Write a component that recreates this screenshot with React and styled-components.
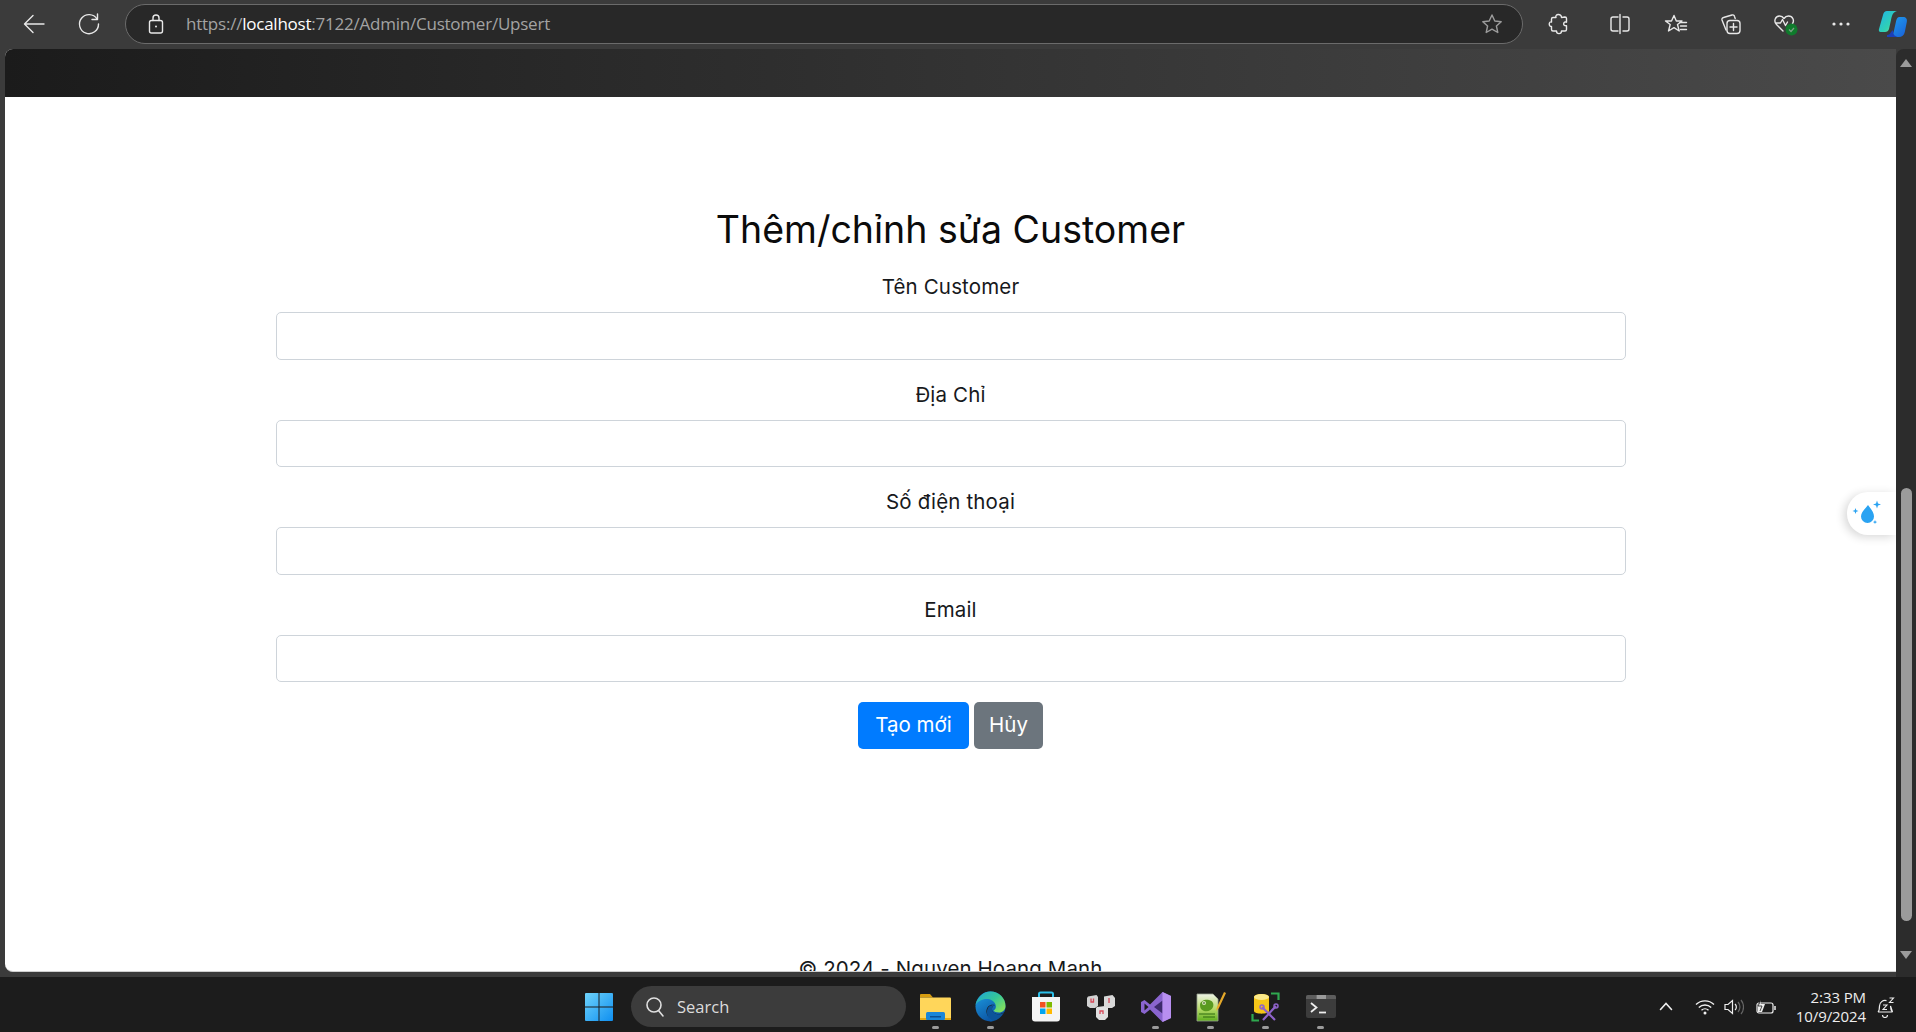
import React from "react";
import styled, { createGlobalStyle } from "styled-components";

const Global = createGlobalStyle`
  html, body { margin: 0; padding: 0; height: 100%; overflow: hidden; background: #1c1c1c; }
  * { box-sizing: border-box; }
`;
const Shell = styled.div`
  width: 1916px; height: 1032px; display: flex; flex-direction: column; overflow: hidden;
  font-family: "Inter", "Liberation Sans", sans-serif;
`;
const Toolbar = styled.div`
  height: 49px; flex: none; background: #3b3b3b; display: flex; align-items: center; padding: 0 0 2px 6.5px;
`;
const Btn = styled.div`
  width: ${p => p.$w || 55}px; height: 40px; flex: none; display: flex; align-items: center; justify-content: center;
`;
const Address = styled.div`
  width: 1398px; height: 40px; flex: none; margin: 0 8px 0 8.5px; border: 1px solid #6b6b6b; border-radius: 20px; background: #282828;
  display: flex; align-items: center; padding: 0 19px 0 21px;
`;
const Url = styled.div`
  flex: 1; margin-left: 21px; font: 17px "Open Sans", sans-serif; color: #a3a3a3; letter-spacing: -0.23px; white-space: nowrap;
  b { font-weight: 400; color: #fff; }
`;
const Sep = styled.div`
  width: 1px; height: 20px; background: #6a6a6a; margin: 0 3px;
`;
const Middle = styled.div`
  flex: 1; min-height: 0; display: flex; background: #3b3b3b; padding-left: 5px; position: relative;
`;
const Viewport = styled.div`
  flex: 1; min-width: 0; display: flex; flex-direction: column; padding-bottom: 5px;
`;
const Page = styled.main`
  flex: 1; min-height: 0; overflow: hidden; background: #fff; border-radius: 8px 0 0 8px; display: flex; flex-direction: column; align-items: center;
  border-bottom: 1px solid #cfcfcf;
`;
const PageHeader = styled.div`
  width: 100%; height: 48px; flex: none; background: linear-gradient(90deg, #1b1b1b 0%, #4a4a4a 100%);
`;
const Form = styled.form`
  width: 1350px; flex: none; padding-top: 109px; display: flex; flex-direction: column; align-items: center; color: #111;
`;
const Title = styled.h2`
  margin: 0 0 18px; font: 400 37.5px/48px "Inter", sans-serif; color: #0b0b0b; text-align: center;
`;
const Field = styled.div`
  width: 100%; display: flex; flex-direction: column; align-items: center; margin-bottom: 20px;
`;
const Label = styled.label`
  font: 400 20.5px/30px "Inter", sans-serif; letter-spacing: .15px; color: #17191c; margin-bottom: 10px;
`;
const Input = styled.input`
  width: 100%; height: 47.5px; border: 1px solid #ced4da; border-radius: 5px; background: #fff; display: block; outline: none;
`;
const Actions = styled.div`
  display: flex; gap: 5px; justify-content: center;
`;
const Button = styled.button`
  height: 47px; width: ${p => p.$w}px; border: 0; border-radius: 5px; background: ${p => p.$bg}; color: #fff; font: 400 20.5px "Inter", sans-serif; padding: 0 0 2px;
`;
const Footer = styled.div`
  flex: none; margin-top: 205px; font: 400 20.5px/30px "Inter", sans-serif; letter-spacing: .1px; color: #17191c; white-space: nowrap;
`;
const Scrollbar = styled.div`
  width: 20px; flex: none; background: #2c2c2c; border-radius: 8px 0 0 0; display: flex; flex-direction: column; align-items: center; position: relative;
  padding: 10px 0 8px;
`;
const Thumb = styled.div`
  width: 11px; height: 433px; margin-top: 421px; background: #9b9b9b; border-radius: 6px; flex: none; margin-bottom: 30px;
`;
const Arrow = styled.div`
  width: 0; height: 0; border-left: 6px solid transparent; border-right: 6px solid transparent; flex: none;
  ${p => p.$down ? "border-top: 8px solid #9b9b9b;" : "border-bottom: 8px solid #9b9b9b;"}
`;
const Widget = styled.div`
  position: absolute; right: 20px; top: 443px; width: 49px; height: 43px; background: #fff; border-radius: 21px 0 0 21px;
  box-shadow: -3px 2px 10px rgba(0,0,0,.16); display: flex; align-items: center; justify-content: center; padding-right: 7px;
`;
const Taskbar = styled.footer`
  height: 55px; flex: none; background: #1c1c1c; display: flex; align-items: center; padding: 4px 0 0 582px; color: #fff;
`;
const WinBtn = styled.div`
  width: 34px; height: 34px; flex: none; display: flex; align-items: center; justify-content: center;
`;
const Search = styled.div`
  width: 275px; height: 41px; flex: none; margin: 0 2px 0 15px; background: #3c3c3c; border-radius: 21px; display: flex; align-items: center; gap: 12px; padding-left: 14px;
  font: 16.5px "Open Sans", sans-serif; color: #dcdcdc;
`;
const AppSlot = styled.div`
  width: 55px; height: 54px; flex: none; display: flex; align-items: center; justify-content: center; position: relative;
  ${p => p.$on && `&::after { content: ""; position: absolute; bottom: 5px; left: 24px; width: 7px; height: 3px; border-radius: 2px; background: #9b9b9b; }`}
`;
const Tray = styled.div`
  margin-left: auto; padding-right: 10px; display: flex; align-items: center; height: 100%;
`;
const TrayIcon = styled.div`
  width: ${p => p.$w || 29}px; margin-left: ${p => p.$ml || 0}px; display: flex; justify-content: center; flex: none;
`;
const Clock = styled.div`
  width: 82px; text-align: right; font: 15px/19px "Open Sans", sans-serif; color: #eee; letter-spacing: -.1px; white-space: nowrap;
`;

const S = { fill: "none", stroke: "#e8e8e8", strokeWidth: 1.4, strokeLinecap: "round", strokeLinejoin: "round" };

const Back = () => <svg width="24" height="24" viewBox="0 0 24 24" {...S}><path d="M22 12H3M11 3.5 2.5 12l8.500 8.500" /></svg>;
const Reload = () => <svg width="24" height="24" viewBox="0 0 24 24" {...S}><path d="M20 7a9.500 9.500 0 1 0 1.500 5" /><path d="M20.500 2v5.500H15" /></svg>;
const Lock = () => <svg width="18" height="20" viewBox="0 0 18 20" {...S}><rect x="2.500" y="6.500" width="13" height="12.500" rx="2" /><path d="M6 6.500V4a3 3 0 0 1 6 0v2.500" /><circle cx="9" cy="12.500" r="1" fill="#e8e8e8" stroke="none" /></svg>;
const Star = () => <svg width="22" height="22" viewBox="0 0 22 22" {...S} stroke="#9c9c9c"><path d="m11 2 2.800 6 6.400.7-4.800 4.300 1.400 6.500L11 16.200 5.200 19.500 6.600 13 1.800 8.700 8.200 8Z" /></svg>;
const Puzzle = () => <svg width="22" height="22" viewBox="0 0 22 22" {...S}><path d="M8 4.500C6.500 1 13.500 0 13.500 4.500L17 4c1 0 1.500 .5 1.500 1.500v3.700c-3-1.500-4.500 4 0 3.600V16.500c0 1-.5 1.500-1.500 1.500h-3.500C13.500 21.500 8.500 21.500 8.500 18H5c-1 0-1.500-.5-1.500-1.500V13.500C.5 14 .5 8 3.500 9V6c0-1 .5-1.500 1.500-1.500Z" /></svg>;
const Split = () => <svg width="22" height="22" viewBox="0 0 22 22" {...S}><path d="M9 4H4a2 2 0 0 0-2 2v10a2 2 0 0 0 2 2h5M14 4h4a2 2 0 0 1 2 2v10a2 2 0 0 1-2 2h-4M11 1.500v19" /></svg>;
const Fav = () => <svg width="24" height="22" viewBox="0 0 24 22" {...S}><path d="M10 2.500 12.300 8H18l-4.500 3.500 1.700 6.500-5.200-3.300-5.500 3.300 1.700-6.500L1.500 8h6Z" /><path d="M16 9.500h6.500M16.500 13h6M16.500 16.500h6" /></svg>;
const Collections = () => <svg width="24" height="24" viewBox="0 0 24 24" {...S}><path d="M7 18 3 8a2 2 0 0 1 1.500-2.500L13 3a2 2 0 0 1 2.500 1.500l.7 2" /><rect x="8" y="8.500" width="13" height="13" rx="3" /><path d="M14.500 11.500v7M11 15h7" /></svg>;
const Heart = () => <svg width="26" height="24" viewBox="0 0 26 24"><path {...S} d="M10 19 3.500 12.500C.5 9.500 2 4 6.500 4c2 0 3.500 1 4.500 2.500C12 5 13.500 4 15.500 4 20 4 21.500 9 19.500 11.500M2.500 11h5l2-3.500 3 6 2-3.500" /><circle cx="18.500" cy="17.500" r="6" fill="#0f7b2c" /><path d="m16 17.500 2 2 3-3.500" fill="none" stroke="#7f9f86" strokeWidth="1.200" /></svg>;
const Dots = () => <svg width="18" height="4" viewBox="0 0 18 4" fill="#e8e8e8"><circle cx="2" cy="2" r="1.600" /><circle cx="9" cy="2" r="1.600" /><circle cx="16" cy="2" r="1.600" /></svg>;
const Copilot = () => (
  <svg width="30" height="28" viewBox="0 0 30 28">
    <defs>
      <linearGradient id="c1" x1="0" y1="0" x2="1" y2="1"><stop offset="0" stopColor="#20b3e8" /><stop offset=".6" stopColor="#2fd0b5" /><stop offset="1" stopColor="#7fe08c" /></linearGradient>
      <linearGradient id="c2" x1="0" y1="0" x2="1" y2="1"><stop offset="0" stopColor="#1fa4ee" /><stop offset="1" stopColor="#1a5fd8" /></linearGradient>
    </defs>
    <path d="M9 1h10c-4 1-5 4-6 9l-2 9c-.5 2-2 3-4 3H2.500C1 22 .5 20.500 1 19L5 5c.6-2.500 2-4 4-4Z" fill="url(#c1)" />
    <path d="M21 7h4c3 0 4.500 2 3.800 5l-2 10c-.7 3.500-3 5-5.800 5H10c3.500-.5 5-2.500 6-6.500l2-9c.4-2 1.300-4.500 3-4.500Z" fill="url(#c2)" />
    <path d="M9 27h12c-4 0-6-2-6-7l-2 2c-1 2-2 3-4 3Z" fill="#1b3fb8" />
  </svg>
);
const Drop = () => (
  <svg width="32" height="30" viewBox="0 0 32 30" fill="#2aa3f2">
    <path d="M16 6c2.500 3.500 6 7 6 11.500a6.500 6.500 0 0 1-13 0C9 13 13.500 9.500 16 6Z" />
    <path d="M25 1.500l1 3 3 1-3 1-1 3-1-3-3-1 3-1ZM3.500 9l.8 2.200 2.200.8-2.200.8L3.500 15l-.8-2.200L.5 12l2.200-.8ZM23 21l.6 1.500 1.500.6-1.500.6L23 25l-.6-1.300-1.500-.6 1.500-.6Z" />
  </svg>
);
const Windows = () => (
  <svg width="30" height="30" viewBox="0 0 30 30">
    <defs><linearGradient id="w" x1="0" y1="0" x2="1" y2="1"><stop offset="0" stopColor="#6ed3fb" /><stop offset="1" stopColor="#0f8ff0" /></linearGradient></defs>
    <path d="M1 2a1 1 0 0 1 1-1h12.500v13.500H1ZM15.500 1H28a1 1 0 0 1 1 1v12.500H15.500ZM1 15.500h13.500V29H2a1 1 0 0 1-1-1ZM15.500 15.500H29V28a1 1 0 0 1-1 1H15.500Z" fill="url(#w)" />
  </svg>
);
const SearchIcon = () => <svg width="20" height="22" viewBox="0 0 20 22" fill="none" stroke="#e0e0e0" strokeWidth="1.600"><circle cx="9" cy="9" r="7" /><path d="m13.500 14.500 4.500 5.500" strokeLinecap="round" /></svg>;
const Folder = () => (
  <svg width="31" height="28" viewBox="0 0 31 28">
    <path d="M0 2a1 1 0 0 1 1-1h9l3 3.500H0Z" fill="#d69c0f" />
    <path d="M0 4.500h30a1 1 0 0 1 1 1V26a1 1 0 0 1-1 1H0Z" fill="#ffd65a" />
    <path d="M0 25h31v2H0Z" fill="#e8a80f" />
    <rect x="6" y="19" width="19" height="8" rx="1.500" fill="#1a86d8" />
    <rect x="10" y="23" width="11" height="1.500" fill="#0a4f92" />
  </svg>
);
const Edge = () => (
  <svg width="31" height="31" viewBox="0 0 31 31">
    <defs>
      <linearGradient id="e1" x1="0" y1="0" x2="1" y2=".8"><stop offset="0" stopColor="#1fa5d8" /><stop offset=".55" stopColor="#34c79a" /><stop offset="1" stopColor="#86e05a" /></linearGradient>
      <linearGradient id="e2" x1="0" y1="0" x2=".6" y2="1"><stop offset="0" stopColor="#1d9fe4" /><stop offset="1" stopColor="#0b4f9e" /></linearGradient>
    </defs>
    <circle cx="15.500" cy="15.500" r="15" fill="url(#e2)" />
    <path d="M31 20 C26 24 21 24 18 21 C16 18 17 15 20 14 C15 12.500 11 16 11.500 21 C12 27 18 31 24 31 L31 31Z" fill="#1c1c1c" />
    <path d="M12 20C12.500 15.500 15.500 13.500 20 14 C17 15 16 18 18 21 C21 24 26 24 29 21.500 C26 27 21 30.500 15.500 30.500 C13 27 11.700 24 12 20Z" fill="#0b5ba8" opacity=".9" />
    <path d="M15.500.5C24 .5 30.500 7 30.500 15c0 4-3 6.500-6.500 6.500-3 0-5-1-5.500-2 2-1 3-3 2-6-1.200-3.500-5-5.500-9-5.500-4.500 0-9 2.500-11 6C2.500 6 8.500.5 15.500.5Z" fill="url(#e1)" />
  </svg>
);
const Store = () => (
  <svg width="30" height="31" viewBox="0 0 30 31">
    <path d="M8 7V3a1.500 1.500 0 0 1 1.500-1.500h11A1.500 1.500 0 0 1 22 3v4" fill="none" stroke="#2cc0ea" strokeWidth="2" />
    <path d="M1 6h28v21.500a3 3 0 0 1-3 3H4a3 3 0 0 1-3-3Z" fill="#f4f4f4" />
    <rect x="9" y="11" width="5.500" height="5.500" fill="#f25022" /><rect x="15.500" y="11" width="5.500" height="5.500" fill="#7fba00" />
    <rect x="9" y="17.500" width="5.500" height="5.500" fill="#00a4ef" /><rect x="15.500" y="17.500" width="5.500" height="5.500" fill="#ffb900" />
  </svg>
);
const Unikey = () => (
  <svg width="30" height="28" viewBox="0 0 30 28">
    <path d="M2 3.500 10.500 2l1.500 2v9l-3 2H4l-3-2V5Z" fill="#d2d2d2" />
    <path d="M18 3.500 26.500 2 29 5v8l-3 2h-5l-3-2Z" fill="#d8d8d8" />
    <path d="M11 14l8-1 3 2v9l-3 3h-6l-3-3v-9Z" fill="#e0e0e0" />
    <path d="M5 5.500V9h2.500V5.500M23 5v5M14 21v-3h3v3" stroke="#d74a5a" strokeWidth="1.300" fill="none" />
  </svg>
);
const VS = () => (
  <svg width="30" height="30" viewBox="0 0 30 30">
    <path d="M21.500 0 9 12.500 3.500 8 0 10v10l3.500 2L9 17.500 21.500 30l8.500-4V4Z" fill="#8a65cf" />
    <path d="M3.500 11.500v7L7.500 15Z" fill="#1c1c1c" />
    <path d="M21.500 8.500v13L13 15Z" fill="#3d2a6c" />
    <path d="M21.500 0 30 4v22l-8.500 4Z" fill="#b88ff0" />
  </svg>
);
const Npp = () => (
  <svg width="30" height="30" viewBox="0 0 30 30">
    <defs><linearGradient id="n" x1="0" y1="0" x2="0" y2="1"><stop offset="0" stopColor="#eef2e6" /><stop offset=".55" stopColor="#b8dc6a" /><stop offset="1" stopColor="#5fae1e" /></linearGradient></defs>
    <path d="M1 2h16l5 5v22H1Z" fill="url(#n)" stroke="#9aa48f" strokeWidth=".8" />
    <path d="M4 13c0-4 5-6 9-5 4 1 5 4 4 7-1 3-5 5-9 4-3-1-4-3-4-6Z" fill="#5a9a20" />
    <circle cx="8" cy="11" r="2" fill="#d8e8b8" /><circle cx="8" cy="11" r=".8" fill="#1c3a0a" />
    <path d="M3 22h16M7 25h12" stroke="#2f6a10" strokeWidth="1.200" />
    <path d="M28 0 21 15l-1 4 3-3 7-15Z" fill="#e5a92a" />
  </svg>
);
const Sql = () => (
  <svg width="29" height="30" viewBox="0 0 29 30">
    <path d="M3 5c0-4 15-4 15 0v14c0 3.500-15 3.500-15 0Z" fill="#f5c518" />
    <ellipse cx="10.500" cy="5" rx="7.500" ry="3" fill="#fbe98a" />
    <path d="M20 1.500h7.500V8M1.500 22v6.500H8" fill="none" stroke="#2fa84f" strokeWidth="2.200" />
    <path d="M11 15 24 28M25 14 12 28" stroke="#8f63c9" strokeWidth="2.200" />
    <circle cx="11" cy="15" r="2" fill="none" stroke="#8f63c9" strokeWidth="1.500" />
    <circle cx="25" cy="14" r="2" fill="none" stroke="#8f63c9" strokeWidth="1.500" />
  </svg>
);
const Terminal = () => (
  <svg width="30" height="23" viewBox="0 0 30 23">
    <rect width="30" height="23" rx="2" fill="#3c3c3c" />
    <path d="M0 2a2 2 0 0 1 2-2h8.500v4H0Z" fill="#5d5d5d" /><path d="M10.500 0H20v4h-9.500Z" fill="#9a9a9a" /><path d="M20 0h8a2 2 0 0 1 2 2v2H20Z" fill="#5d5d5d" />
    <path d="m5 8 5.500 4.500L5 17" fill="none" stroke="#eee" strokeWidth="1.800" /><path d="M13 17.500h7" stroke="#eee" strokeWidth="1.800" />
  </svg>
);
const Chevron = () => <svg width="14" height="9" viewBox="0 0 14 9" fill="none" stroke="#eee" strokeWidth="1.600" strokeLinecap="round"><path d="m1.500 7.500 5.500-6 5.500 6" /></svg>;
const Wifi = () => <svg width="20" height="16" viewBox="0 0 20 16" fill="none" stroke="#f0f0f0" strokeWidth="1.400"><path d="M1 5.500a13 13 0 0 1 18 0M3.800 8.500a9 9 0 0 1 12.400 0M6.500 11.300a5 5 0 0 1 7 0" /><circle cx="10" cy="14" r="1.500" fill="#f0f0f0" stroke="none" /></svg>;
const Speaker = () => <svg width="20" height="16" viewBox="0 0 20 16" fill="none" stroke="#eee" strokeWidth="1.200"><path d="M1 5.500h3L8.500 1.500v13L4 10.500H1Z" /><path d="M11 5a4 4 0 0 1 0 6" /><path d="M14 3a7.500 7.500 0 0 1 0 10M17 1a11 11 0 0 1 0 14" stroke="#666" /></svg>;
const Battery = () => <svg width="21" height="16" viewBox="0 0 21 16" fill="none" stroke="#eee" strokeWidth="1.200"><rect x="1" y="4" width="16" height="10" rx="2" /><path d="M19 7v4" strokeWidth="1.500" /><path d="M2 13V5h7L6 13Z" fill="#eee" stroke="none" /><path d="m5 1-3 6h4l-2 5" stroke="#1c1c1c" strokeWidth=".8" fill="#eee" /></svg>;
const Bell = () => <svg width="20" height="22" viewBox="0 0 20 22" fill="none" stroke="#eee" strokeWidth="1.200"><path d="M2 16c1.500-1.500 1.500-3 1.500-6a5.500 5.500 0 0 1 7-5.300M14.500 10c0 3 .5 4.500 2 6ZM2 16h14.500M6.500 19a2.500 2.500 0 0 0 5 0" /><path d="M7 9h4l-4 4.500h4M13.500 2h4l-4 4.500h4" strokeWidth="1.100" /></svg>;

const fields = ["Tên Customer", "Địa Chỉ", "Số điện thoại", "Email"];
const apps = [
  [Folder, true], [Edge, true], [Store, false], [Unikey, false], [VS, true], [Npp, true], [Sql, true], [Terminal, true],
];

export default function App() {
  return (
    <Shell>
      <Global />
      <Toolbar>
        <Btn><Back /></Btn>
        <Btn><Reload /></Btn>
        <Address>
          <Lock />
          <Url>https://<b>localhost</b>:7122/Admin/Customer/Upsert</Url>
          <Star />
        </Address>
        <Btn><Puzzle /></Btn>
        <Sep />
        <Btn $w={56}><Split /></Btn>
        <Btn><Fav /></Btn>
        <Btn><Collections /></Btn>
        <Btn><Heart /></Btn>
        <Btn><Dots /></Btn>
        <Btn $w={50}><Copilot /></Btn>
      </Toolbar>
      <Middle>
        <Viewport>
          <Page>
            <PageHeader />
            <Form>
              <Title>Thêm/chỉnh sửa Customer</Title>
              {fields.map(f => (
                <Field key={f}>
                  <Label>{f}</Label>
                  <Input type="text" />
                </Field>
              ))}
              <Actions>
                <Button type="button" $bg="#007bff" $w={111}>Tạo mới</Button>
                <Button type="button" $bg="#6c757d" $w={69}>Hủy</Button>
              </Actions>
            </Form>
            <Footer>© 2024 - Nguyen Hoang Manh</Footer>
          </Page>
        </Viewport>
        <Scrollbar>
          <Arrow />
          <Thumb />
          <Arrow $down />
        </Scrollbar>
        <Widget><Drop /></Widget>
      </Middle>
      <Taskbar>
        <WinBtn><Windows /></WinBtn>
        <Search><SearchIcon />Search</Search>
        {apps.map(([Icon, on], i) => <AppSlot key={i} $on={on}><Icon /></AppSlot>)}
        <Tray>
          <TrayIcon $w={28}><Chevron /></TrayIcon>
          <TrayIcon $w={30} $ml={10}><Wifi /></TrayIcon>
          <TrayIcon $w={28}><Speaker /></TrayIcon>
          <TrayIcon $w={36}><Battery /></TrayIcon>
          <Clock>2:33 PM<br />10/9/2024</Clock>
          <TrayIcon $w={40}><Bell /></TrayIcon>
        </Tray>
      </Taskbar>
    </Shell>
  );
}
